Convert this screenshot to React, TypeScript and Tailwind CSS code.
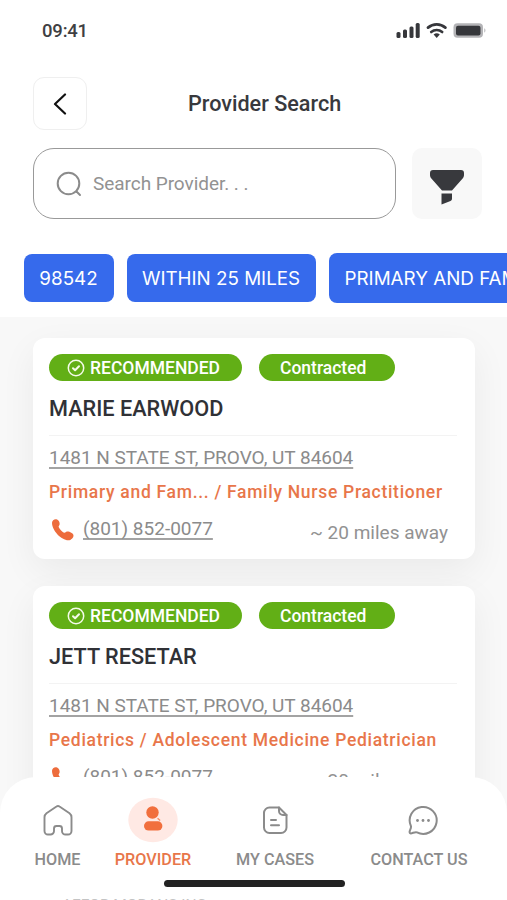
import React from 'react';

interface Provider {
  id: number;
  name: string;
  address: string;
  specialty: string;
  phone: string;
  distance: string;
}

const providers: Provider[] = [
  {
    id: 1,
    name: 'MARIE EARWOOD',
    address: '1481 N STATE ST, PROVO, UT 84604',
    specialty: 'Primary and Fam... / Family Nurse Practitioner',
    phone: '(801) 852-0077',
    distance: '~ 20 miles away',
  },
  {
    id: 2,
    name: 'JETT RESETAR',
    address: '1481 N STATE ST, PROVO, UT 84604',
    specialty: 'Pediatrics / Adolescent Medicine Pediatrician',
    phone: '(801) 852-0077',
    distance: '~ 20 miles away',
  },
];

const StatusBar = () => (
  <div className="flex h-[62px] items-center justify-between pl-[42px] pr-[21px]">
    <span className="pt-[2px] text-[18.5px] font-medium tracking-[-0.2px] text-[#3f3f43]">09:41</span>
    <svg width="92" height="18" viewBox="0 0 92 18" fill="none">
      <g fill="#36373b">
        <rect x="2.5" y="10" width="4" height="6" rx="1.5" />
        <rect x="9" y="7.5" width="4" height="8.5" rx="1.5" />
        <rect x="15.5" y="4.5" width="4" height="11.5" rx="1.5" />
        <rect x="21.7" y="1" width="4" height="15" rx="1.5" />
      </g>
      <path d="M34 5.6a13.5 13.5 0 0 1 17.4 0" stroke="#36373b" strokeWidth="2.8" strokeLinecap="round" />
      <path d="M37.2 10a8.6 8.6 0 0 1 11 0" stroke="#36373b" strokeWidth="2.6" strokeLinecap="round" />
      <path d="M39.6 12.6a4.8 4.8 0 0 1 6.2 0l-3.1 3.3z" fill="#36373b" />
      <rect x="59.5" y="1.2" width="29.5" height="14.6" rx="4" fill="#b4b4b7" />
      <rect x="62" y="3.7" width="24.5" height="9.8" rx="2" fill="#36373b" />
      <path d="M90.3 6.3v4.4c1.5-.6 1.5-3.8 0-4.4z" fill="#b4b4b7" />
    </svg>
  </div>
);

const FilterChips = () => (
  <div className="mt-[34px] flex h-[50px] items-center gap-[13px] overflow-hidden pl-[23.5px] font-[Inter,sans-serif] text-[18.8px] text-white">
    <div className="flex h-12 w-[90px] shrink-0 items-center justify-center rounded-lg bg-[#366aec] pt-[3px]">98542</div>
    <div className="flex h-12 w-[189px] shrink-0 items-center justify-center rounded-lg bg-[#366aec] pt-[3px]">
      WITHIN 25 MILES
    </div>
    <div className="flex h-[50px] w-[300px] shrink-0 items-center rounded-lg bg-[#366aec] pt-[3px] pl-4 whitespace-nowrap">
      PRIMARY AND FAMILY
    </div>
  </div>
);

const ProviderCard: React.FC<{ provider: Provider }> = ({ provider }) => (
  <div className="h-[221px] rounded-xl bg-white px-4 pt-4 shadow-[0_12px_36px_rgba(0,0,0,0.06)]">
    <div className="flex gap-[17px] font-medium text-white">
      <div className="flex h-[27px] w-[193px] items-center rounded-full bg-[#62af16] pl-[18px]">
        <svg width="18" height="18" viewBox="0 0 18 18" fill="none" stroke="#f4fbe9" strokeWidth="1.5">
          <circle cx="9" cy="9" r="7.7" />
          <path d="M6 9.2l2.1 2 3.9-4" strokeWidth="2" strokeLinecap="round" strokeLinejoin="round" />
        </svg>
        <span className="ml-[5px] pt-[2px] text-[17.5px] leading-none">RECOMMENDED</span>
      </div>
      <div className="flex h-[27px] w-[136px] items-center rounded-full bg-[#62af16] pl-[21px]">
        <span className="pt-[2px] text-[17.5px] leading-none">Contracted</span>
      </div>
    </div>
    <h2 className="mt-4 text-[21.7px] font-medium leading-6 text-[#303136]">{provider.name}</h2>
    <div className="mt-[14px] mr-[2px] border-t border-[#f3f3f3]" />
    <p className="mt-[11px] text-[19px] leading-[22px] tracking-[-0.03px] whitespace-nowrap text-[#8b8b8b] underline decoration-[#a3a3a3] decoration-[1.5px] underline-offset-[2.5px] [text-decoration-skip-ink:none]">
      {provider.address}
    </p>
    <p className="mt-[12px] text-[17.5px] font-medium leading-[22px] tracking-[0.7px] whitespace-nowrap text-[#e8764a]">
      {provider.specialty}
    </p>
    <div className="mt-[15px] flex h-[28px] items-start">
      <svg className="ml-[2px]" width="24" height="24" viewBox="0 0 24 24" fill="#ed6c3c">
        <path d="M1 4.8C1 2.6 3.3.8 5.3 1.2c2.2.4 3.8 3.3 3.3 5.2-.3 1.2-1.3 1.6-.9 2.7.6 2 3.4 4.9 5.3 5.6 1.2.4 1.7-.9 3-1.1 2.1-.4 6.2 1.5 6.5 3.8.2 2.1-2.7 4.8-4.9 4.9C10.5 22.5 1 12.6 1 4.8z" />
      </svg>
      <span className="ml-[8px] text-[19px] leading-[22px] whitespace-nowrap text-[#8b8b8b] underline decoration-[#a3a3a3] decoration-[1.5px] underline-offset-[2.5px] [text-decoration-skip-ink:none]">
        {provider.phone}
      </span>
      <span className="mt-[4px] ml-auto pr-[11px] text-[19px] leading-[22px] text-[#929292]">{provider.distance}</span>
    </div>
  </div>
);

const HomeIcon = () => (
  <svg width="32" height="32" viewBox="0 0 32 32" fill="none" stroke="#8b8b8b" strokeWidth="1.9" strokeLinejoin="round">
    <path d="M14.5 2.5 4.5 9.2a5 5 0 0 0-2 4V27a3.5 3.5 0 0 0 3.5 3.5h2.5a3.5 3.5 0 0 0 3.5-3.5v-2.5a2.5 2.5 0 0 1 2.5-2.5h3a2.5 2.5 0 0 1 2.5 2.5V27a3.5 3.5 0 0 0 3.5 3.5H26a3.5 3.5 0 0 0 3.5-3.5V13.2a5 5 0 0 0-2-4L17.5 2.5a2.6 2.6 0 0 0-3 0z" />
  </svg>
);

const ProviderIcon = () => (
  <svg width="50" height="46" viewBox="0 0 50 46">
    <ellipse cx="25" cy="23" rx="24.7" ry="22.3" fill="#ffe9e4" />
    <circle cx="24.5" cy="15.5" r="6.2" fill="#f16f3d" />
    <rect x="16" y="24.3" width="18.4" height="9.2" rx="4.6" fill="#f16f3d" />
    <path d="m30 20.8 2.6 2.2-.9.9-2.6-2.2z" fill="#f58b61" />
  </svg>
);

const CasesIcon = () => (
  <svg width="32" height="32" viewBox="0 0 32 32" fill="none" stroke="#8b8b8b" strokeWidth="2" strokeLinecap="round" strokeLinejoin="round">
    <path d="M20 3.5H10.5A5.5 5.5 0 0 0 5 9v14.5A5.5 5.5 0 0 0 10.5 29H22a5.5 5.5 0 0 0 5.5-5.500V11z" />
    <path d="M20 3.5V7a4 4 0 0 0 4 4h3.500M12 16h5M12 21.300h8" />
  </svg>
);

const ContactIcon = () => (
  <svg className="ml-[8px]" width="32" height="32" viewBox="0 0 32 32" fill="none" stroke="#8b8b8b" strokeWidth="2" strokeLinejoin="round">
    <path d="M3.9 22A13.5 13.5 0 1 1 10 28.4c-1.5-.7-3 .2-5.3.9-1.600.4-2.400-.4-2-2.100.4-1.800 1.800-3.500 1.200-5.200z" />
    <g fill="#8b8b8b" stroke="none">
      <circle cx="10.500" cy="16.500" r="1.400" />
      <circle cx="16" cy="16.500" r="1.400" />
      <circle cx="21.500" cy="16.500" r="1.400" />
    </g>
  </svg>
);

const navItems = [
  { label: 'HOME', icon: <HomeIcon />, width: 'w-[115px]', active: false },
  { label: 'PROVIDER', icon: <ProviderIcon />, width: 'w-[76px]', active: true },
  { label: 'MY CASES', icon: <CasesIcon />, width: 'w-[168px]', active: false },
  { label: 'CONTACT US', icon: <ContactIcon />, width: 'w-[120px]', active: false },
];

const BottomNav = () => (
  <nav className="absolute inset-x-0 bottom-0 h-[123px] overflow-hidden rounded-t-[36px] bg-white pt-[20px]">
    <div className="flex">
      {navItems.map((item) => (
        <div
          key={item.label}
          className={`flex ${item.width} shrink-0 flex-col items-center text-[16.2px] font-medium leading-5 whitespace-nowrap ${
            item.active ? 'text-[#e8764a]' : 'text-[#8b8b8b]'
          }`}
        >
          <div className="flex h-[46px] items-center">{item.icon}</div>
          <span className="mt-[7px]">{item.label}</span>
        </div>
      ))}
    </div>
    <div className="mt-[10px] ml-[164px] h-[7px] w-[181px] rounded-full bg-[#222]" />
    {/* next row showing under the home indicator */}
    <p className="mt-[8px] ml-[62px] text-[15.5px] leading-5 whitespace-nowrap text-[#c4c4c4]">AFFOR MORANS INC</p>
  </nav>
);

export default function App() {
  return (
    <div className="relative h-[900px] w-[507px] overflow-hidden bg-white font-[Roboto,sans-serif]">
      <StatusBar />
      <header className="mt-[15px] flex h-[53px] items-center pl-[33px]">
        <button className="flex h-[53px] w-[54px] items-center justify-center rounded-[11px] border border-[#efefef]">
          <svg width="14" height="22" viewBox="0 0 14 22" fill="none" stroke="#111" strokeWidth="2.2" strokeLinecap="round" strokeLinejoin="round">
            <path d="M12 1.5 2 11l10 9.5" />
          </svg>
        </button>
        <h1 className="ml-[101px] pt-px text-[21.6px] font-medium whitespace-nowrap text-[#38393d]">Provider Search</h1>
      </header>
      <div className="mt-[18px] flex h-[71px] items-center gap-4 pl-[33px]">
        <div className="flex h-[71px] w-[363px] items-center rounded-[21px] border-[1.5px] border-[#999] pl-[22px]">
          <svg width="26" height="26" viewBox="0 0 26 26" fill="none" stroke="#8b8b8b" strokeWidth="2" strokeLinecap="round">
            <circle cx="12.5" cy="12.5" r="10.8" />
            <path d="m20.5 20.5 3.5 3.5" />
          </svg>
          <span className="ml-[11px] pt-[2px] text-[19px] tracking-[-0.05px] text-[#929292]">Search Provider. . .</span>
        </div>
        <button className="flex h-[71px] w-[70px] items-center justify-center rounded-[10px] bg-[#f8f8f8] pt-[6px]">
          <svg width="36" height="36" viewBox="0 0 36 36" fill="#38393d">
            <path d="M4 1h28c2 0 3 1 3 3v2c0 1.5-.6 2.7-1.6 3.7L23 21.5H13L2.6 9.7C1.6 8.7 1 7.5 1 6V4c0-2 1-3 3-3z" />
            <path d="M12.5 24.5H23v5c0 1.2-.5 1.9-1.5 2.4l-9 3.6z" />
          </svg>
        </button>
      </div>
      <FilterChips />
      <main className="mt-[14px] h-[583px] space-y-[27px] bg-[#f8f8f8] pt-[21px] pr-8 pl-[33px]">
        {providers.map((provider) => (
          <ProviderCard key={provider.id} provider={provider} />
        ))}
      </main>
      <BottomNav />
    </div>
  );
}
